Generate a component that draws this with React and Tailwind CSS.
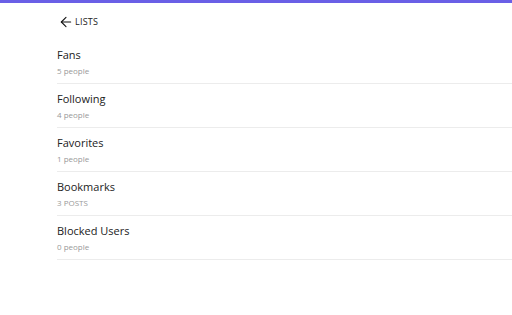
import { ArrowLeft } from "lucide-react";

const lists = [
  { name: "Fans", meta: "5 people" },
  { name: "Following", meta: "4 people" },
  { name: "Favorites", meta: "1 people" },
  { name: "Bookmarks", meta: "3 POSTS" },
  { name: "Blocked Users", meta: "0 people" },
];

function ListRow({ name, meta }) {
  return (
    <div className="border-b border-[#ececec] pt-[8px] pb-[7px]">
      <div className="text-[11px] leading-[13px] text-[#222]">{name}</div>
      <div className="mt-[4px] text-[8px] leading-[11px] text-[#999]">{meta}</div>
    </div>
  );
}

export default function App() {
  return (
    <div className="min-h-[315px] bg-white font-['Open_Sans',sans-serif]">
      <div className="h-[3px] bg-[#6a5fe6]" />
      <div className="pl-[57px]">
        <div className="flex h-[37px] items-center gap-[1px] pl-[1px]">
          <ArrowLeft size={16} strokeWidth={1.6} className="text-[#111]" />
          <span className="text-[9px] font-medium tracking-wide text-[#222]">LISTS</span>
        </div>
        {lists.map((l) => (
          <ListRow key={l.name} {...l} />
        ))}
      </div>
    </div>
  );
}
